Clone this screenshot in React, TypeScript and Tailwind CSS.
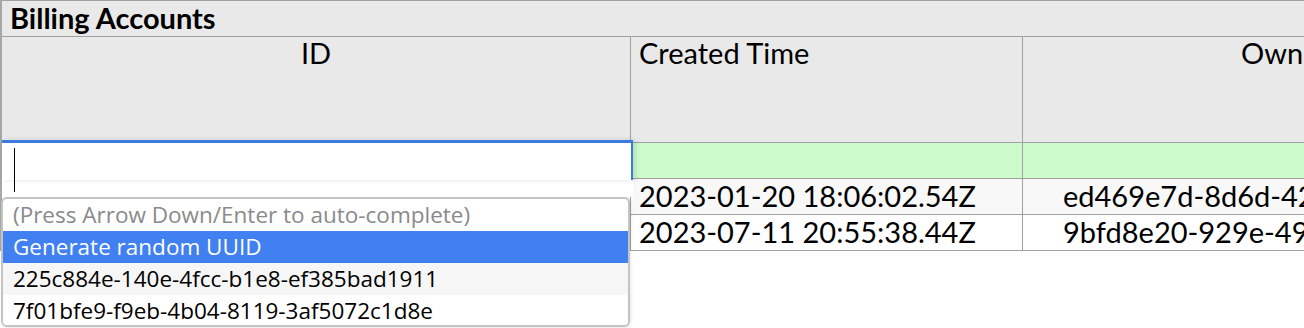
import React from "react";

const rows = [
  { created: "2023-01-20 18:06:02.54Z", owner: "ed469e7d-8d6d-42a1-9c3e-5b7f2d10e8a4" },
  { created: "2023-07-11 20:55:38.44Z", owner: "9bfd8e20-929e-49c2-8a1d-0e6f3b47c915" },
];

const suggestions = [
  "225c884e-140e-4fcc-b1e8-ef385bad1911",
  "7f01bfe9-f9eb-4b04-8119-3af5072c1d8e",
];

const App = () => {
  return (
    <div className="relative w-[1304px] h-[328px] overflow-hidden bg-white font-['Lato',sans-serif] text-black">
      <div className="w-[1560px] border-l-2 border-[#a6a6a6]">
        {/* title */}
        <div className="h-[37px] bg-[#e9e9e9] border-y border-[#a0a0a0] pl-2 text-[29px] font-bold leading-[34px]">
          Billing Accounts
        </div>

        {/* header */}
        <div className="flex h-[106px] bg-[#e9e9e9] border-b border-[#a0a0a0] text-[29px] leading-[26px]">
          <div className="w-[629px] border-r border-[#a0a0a0] pt-[3px] text-center">ID</div>
          <div className="w-[392px] border-r border-[#a0a0a0] pt-[3px] pl-2">Created Time</div>
          <div className="w-[524px] pt-[3px] text-center">Owner</div>
        </div>

        {/* new row */}
        <div className="flex h-[36px] bg-[#ccfccc] border-b border-[#a0a0a0]">
          <div className="w-[629px] border-r border-[#a0a0a0]" />
          <div className="w-[392px] border-r border-[#a0a0a0]" />
          <div className="w-[524px]" />
        </div>

        {rows.map((r, i) => (
          <div
            key={r.created}
            className={`flex h-[36px] border-b border-[#a0a0a0] text-[29px] leading-[34px] ${i === 0 ? "bg-[#f8f8f8]" : "bg-white"}`}
          >
            <div className="w-[629px] border-r border-[#a0a0a0]" />
            <div className="w-[392px] border-r border-[#a0a0a0] pl-2 whitespace-nowrap">{r.created}</div>
            <div className="w-[524px] pl-10 whitespace-nowrap">{r.owner}</div>
          </div>
        ))}
      </div>

      {/* editing cell */}
      <div className="absolute left-[2px] top-[140px] w-[631px] h-[57px] bg-white">
        <div className="h-[40px] border-t-[3px] border-r-2 border-[#3b7be0] shadow-[3px_0_5px_rgba(0,0,0,0.12)]" />
        <div className="absolute left-[12px] top-[8px] w-px h-[44px] bg-black" />
      </div>

      {/* autocomplete */}
      <div className="absolute left-[1px] top-[197px] w-[629px] h-[130px] bg-white border-2 border-[#c4c4c4] rounded-md overflow-hidden font-['Open_Sans',sans-serif] text-[22.5px] leading-[32px] shadow-[1px_1px_3px_rgba(0,0,0,0.1)]">
        <div className="pl-[10px] text-[#8a8a8a]">(Press Arrow Down/Enter to auto-complete)</div>
        <div className="pl-[10px] bg-[#4080f0] text-white">Generate random UUID</div>
        {suggestions.map((s, i) => (
          <div key={s} className={`pl-[10px] ${i === 0 ? "bg-[#f6f6f6]" : "bg-white"}`}>
            {s}
          </div>
        ))}
      </div>
    </div>
  );
};

export default App;
